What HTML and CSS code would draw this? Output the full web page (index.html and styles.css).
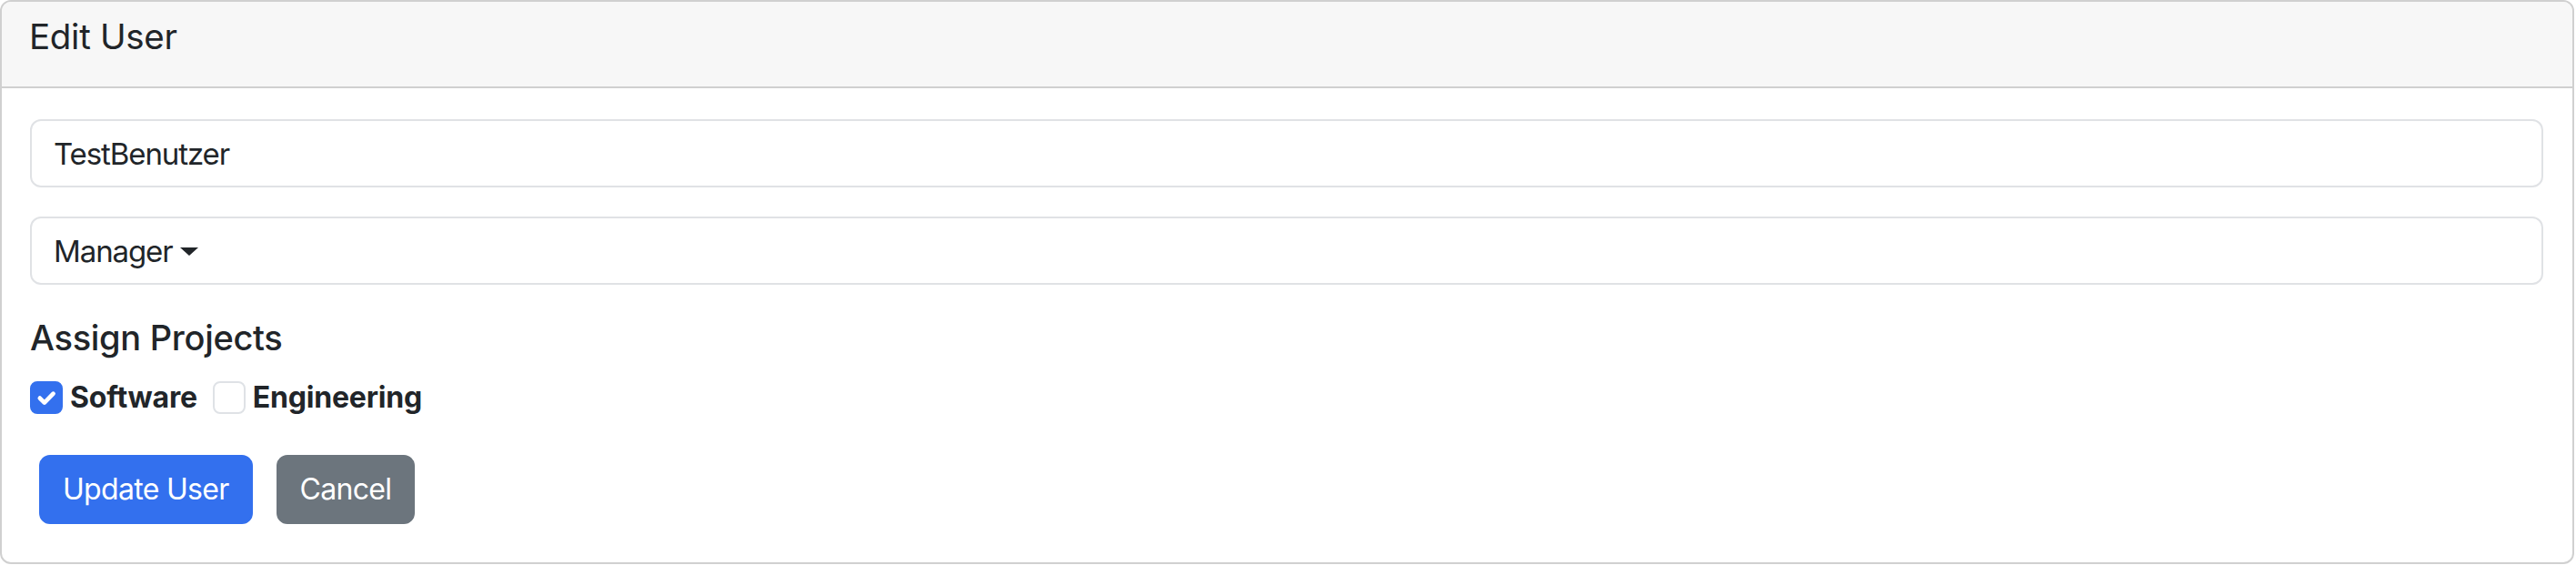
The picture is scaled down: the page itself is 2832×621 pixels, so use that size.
FILE: index.html
```html
<!DOCTYPE html>
<html lang="de">
<head>
<meta charset="utf-8">
<title>Edit User</title>
<link rel="stylesheet" href="styles.css">
</head>
<body>
<div class="card">
  <div class="card-header">
    <h5 class="card-title">Edit User</h5>
  </div>
  <div class="card-body">
    <input class="form-control" type="text" value="TestBenutzer">
    <button class="form-control dropdown" type="button"><span>Manager</span><span class="caret"></span></button>
    <h5 class="section-title">Assign Projects</h5>
    <div class="checks">
      <label class="check">
        <span class="box checked"><svg viewBox="0 0 20 20" width="36" height="36"><path d="M6 10.3l2.8 2.8L14.2 7.6" fill="none" stroke="#fff" stroke-width="2.6" stroke-linecap="round" stroke-linejoin="round"/></svg></span>
        <span class="check-label">Software</span>
      </label>
      <label class="check">
        <span class="box"></span>
        <span class="check-label">Engineering</span>
      </label>
    </div>
    <div class="actions">
      <button class="btn btn-primary" type="button">Update User</button>
      <button class="btn btn-secondary" type="button">Cancel</button>
    </div>
  </div>
</div>
</body>
</html>
```
FILE: styles.css
```css
* { box-sizing: border-box; }
html, body { margin: 0; padding: 0; background: #fff; }
body {
  font-family: "Inter", "Roboto", "Noto Sans", sans-serif;
  color: #212529;
}
.card {
  width: 2830px;
  height: 620px;
  border: 2px solid #d0d0d0;
  border-radius: 12px;
  overflow: hidden;
  display: flex;
  flex-direction: column;
}
.card-header {
  height: 95px;
  background: #f7f7f7;
  border-bottom: 2px solid #d0d0d0;
  padding: 15px 30px 0;
  flex: none;
}
.card-title {
  margin: 0;
  font-size: 38.5px;
  font-weight: 400;
  line-height: 1.2;
  letter-spacing: -0.3px;
}
.card-body {
  padding: 34px 32px 0 31px;
  display: flex;
  flex-direction: column;
  align-items: stretch;
}
.form-control {
  display: flex;
  align-items: center;
  width: 100%;
  height: 75px;
  margin: 0 0 32px;
  padding: 0 24px;
  border: 2px solid #e0e2e5;
  border-radius: 12px;
  background: #fff;
  font-family: inherit;
  font-size: 33px;
  color: #212529;
  letter-spacing: -1.1px;
  text-align: left;
}
.form-control:focus { outline: none; }
.dropdown { margin-bottom: 36px; }
.caret {
  display: inline-block;
  margin-left: 8px;
  width: 0;
  height: 0;
  border-top: 9px solid #212529;
  border-left: 10px solid transparent;
  border-right: 10px solid transparent;
  position: relative;
  top: 1px;
}
.section-title {
  margin: 0;
  font-size: 38px;
  font-weight: 500;
  line-height: 1.2;
  letter-spacing: -0.3px;
}
.checks {
  display: flex;
  align-items: center;
  margin-top: 23px;
  gap: 17px;
}
.check {
  display: flex;
  align-items: center;
  gap: 8px;
}
.box {
  width: 36px;
  height: 36px;
  border: 2px solid #dfe2e6;
  border-radius: 8px;
  background: #fff;
  display: flex;
  align-items: center;
  justify-content: center;
}
.box.checked {
  background: #3370ee;
  border-color: #3370ee;
}
.box svg { display: block; flex: none; }
.check-label {
  font-size: 32px;
  font-weight: 700;
  letter-spacing: -0.2px;
  line-height: 1.2;
}
.actions {
  display: flex;
  margin-top: 34px;
  padding-left: 10px;
  gap: 26px;
}
.btn {
  height: 76px;
  margin: 10px 0;
  padding: 0 24px;
  border: 2px solid transparent;
  border-radius: 12px;
  font-family: inherit;
  font-size: 32px;
  font-weight: 400;
  letter-spacing: -0.7px;
  color: #fff;
  cursor: pointer;
}
.btn-primary { background: #3370ee; border-color: #3370ee; }
.btn-secondary { background: #6c757d; border-color: #6c757d; }
```
